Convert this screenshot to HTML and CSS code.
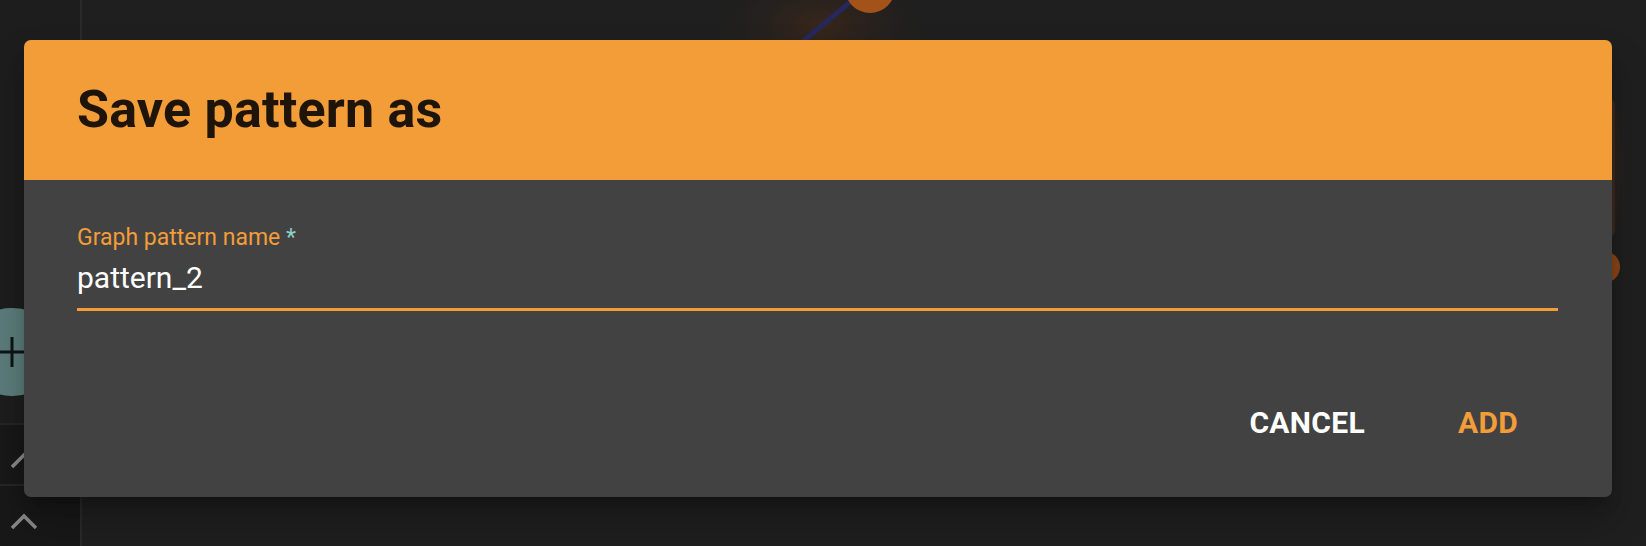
FILE: index.html
```html
<!DOCTYPE html>
<html>
<head>
<meta charset="utf-8">
<link rel="stylesheet" href="styles.css">
</head>
<body>
<div class="app">
  <aside class="sidebar">
    <div class="fab"><svg width="40" height="40" viewBox="0 0 40 40"><path d="M20 5v30M5 20h30" stroke="#0d1515" stroke-width="3"/></svg></div>
    <div class="side-row first"><svg width="30" height="20" viewBox="0 0 30 20"><path d="M3 17l12-12 12 12" stroke="#8a8a8a" stroke-width="3.5" fill="none"/></svg></div>
    <div class="side-row"><svg width="30" height="20" viewBox="0 0 30 20"><path d="M3 17l12-12 12 12" stroke="#8a8a8a" stroke-width="3.5" fill="none"/></svg></div>
  </aside>
  <main class="canvas">
    <svg class="graph" width="1564" height="546" viewBox="82 0 1564 546">
      <defs>
        <radialGradient id="g1" cx="0.5" cy="0.5" r="0.5">
          <stop offset="0" stop-color="#6a3512" stop-opacity="0.35"/>
          <stop offset="1" stop-color="#1f1f1f" stop-opacity="0"/>
        </radialGradient>
        <radialGradient id="g2" cx="0.5" cy="0.5" r="0.5">
          <stop offset="0" stop-color="#6a3512" stop-opacity="0.5"/>
          <stop offset="1" stop-color="#1f1f1f" stop-opacity="0"/>
        </radialGradient>
      </defs>
      <ellipse cx="820" cy="25" rx="120" ry="70" fill="url(#g1)"/>
      <line x1="802" y1="42" x2="855" y2="-2" stroke="#25285a" stroke-width="5"/>
      <circle cx="870" cy="-12" r="25" fill="#a35219"/>
      <rect x="1555" y="60" width="80" height="210" rx="30" fill="url(#g2)"/>
      <rect x="1590" y="98" width="25" height="140" rx="8" fill="#3b2a1f"/>
      <circle cx="1604" cy="267" r="16" fill="#8a4418"/>
    </svg>
  </main>
</div>
<div class="dialog">
  <header class="dialog-head"><h2>Save pattern as</h2></header>
  <section class="dialog-body">
    <label class="field-label">Graph pattern name <span class="req">*</span></label>
    <div class="field-input">pattern_2</div>
  </section>
  <footer class="dialog-actions">
    <button class="btn cancel">CANCEL</button>
    <button class="btn add">ADD</button>
  </footer>
</div>
</body>
</html>
```
FILE: styles.css
```css
* { box-sizing: border-box; }
html, body { margin: 0; padding: 0; }
body {
  width: 1646px; height: 546px; overflow: hidden;
  background: #1f1f1f;
  font-family: Roboto, "Liberation Sans", sans-serif;
  position: relative;
}
.app { display: flex; height: 546px; }
.sidebar {
  width: 82px; flex: none;
  background: #1d1d1d;
  border-right: 2px solid #2a2a2a;
  display: flex; flex-direction: column;
  padding-top: 308px;
}
.fab {
  width: 90px; height: 88px; margin-left: -33px;
  border-radius: 44px; background: #5b7d7b;
  display: flex; align-items: center; justify-content: center;
  margin-bottom: 27px;
}
.side-row {
  height: 62px; border-top: 2px solid #262626;
  background: #181818;
  display: flex; align-items: center;
  padding: 10px 0 0 9px;
}
.side-row.first { height: 61px; }
.canvas { flex: 1; position: relative; overflow: hidden; }
.graph { display: block; }
.dialog {
  position: absolute; left: 24px; top: 40px;
  width: 1588px; height: 457px;
  background: #424242; border-radius: 7px; overflow: hidden;
  box-shadow: 0 11px 15px -7px rgba(0,0,0,.3), 0 24px 38px 3px rgba(0,0,0,.2);
  display: flex; flex-direction: column;
}
.dialog-head {
  height: 140px; flex: none; background: #f29d38;
  padding: 0 0 0 53px; display: flex; align-items: center;
}
.dialog-head h2 {
  margin: 0; font-size: 52px; font-weight: 700; color: #1e140a;
  letter-spacing: 0.2px; line-height: 1;
}
.dialog-body { padding: 44px 54px 0 53px; display: flex; flex-direction: column; }
.field-label { color: #f29d38; font-size: 23px; line-height: 27px; }
.req { color: #8fcfc8; }
.field-input {
  color: #ffffff; font-size: 30px; line-height: 36px;
  margin-top: 9px;
  padding: 0 0 12px;
  border-bottom: 3px solid #f29d38;
}
.dialog-actions {
  margin-top: auto; display: flex; justify-content: flex-end;
  padding: 0 94px 56px 0; gap: 93px;
}
.btn {
  background: none; border: 0; padding: 0; cursor: pointer;
  font-family: Roboto, "Liberation Sans", sans-serif;
  font-size: 30px; font-weight: 700; letter-spacing: 0.3px; line-height: 36px;
}
.cancel { color: #ffffff; }
.add { color: #f29d38; }
```
